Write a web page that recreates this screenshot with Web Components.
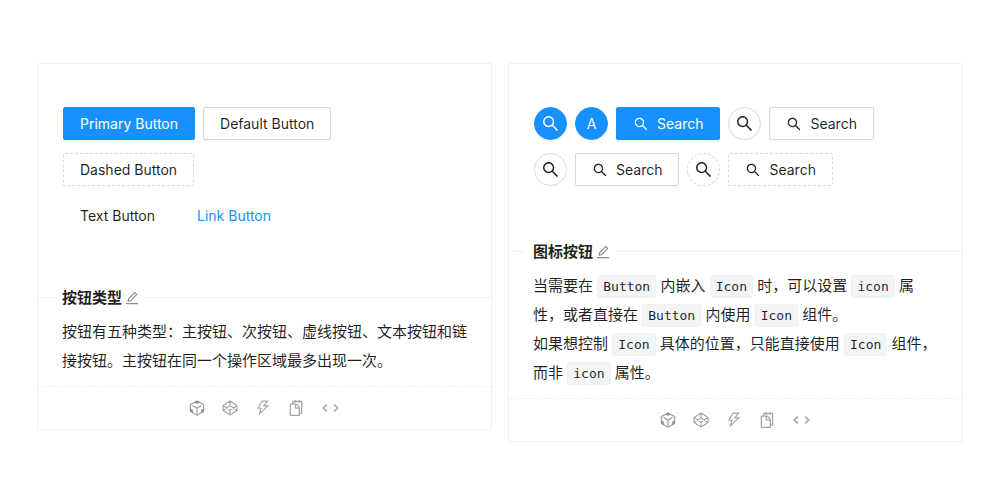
<!DOCTYPE html>
<html lang="zh-CN">
<head>
<meta charset="utf-8">
<meta name="viewport" content="width=device-width, initial-scale=1">
<title>Button 按钮</title>
<style>
  body {
    margin: 0;
    padding: 63px 37px;
    background: #fff;
    color: rgba(0, 0, 0, .88);
    font: 15px/29px Inter, "Noto Sans CJK SC", sans-serif;
  }
  code {
    display: inline-block;
    vertical-align: middle;
    padding: 0 5px;
    border: 1px solid #eff0f2;
    border-radius: 3px;
    background: #f2f4f5;
    font: 13px/21px "DejaVu Sans Mono", monospace;
  }
</style>
</head>
<body>
<demo-grid>
  <demo-card heading="按钮类型">
    <button-row slot="demo">
      <ui-button type="primary">Primary Button</ui-button>
      <ui-button>Default Button</ui-button>
      <ui-button type="dashed">Dashed Button</ui-button>
    </button-row>
    <button-row slot="demo">
      <ui-button type="text">Text Button</ui-button>
      <ui-button type="link">Link Button</ui-button>
    </button-row>
    <p>按钮有五种类型：主按钮、次按钮、虚线按钮、文本按钮和链接按钮。主按钮在同一个操作区域最多出现一次。</p>
  </demo-card>
  <demo-card heading="图标按钮">
    <button-row slot="demo">
      <ui-button type="primary" shape="circle" icon="search" label="Search"></ui-button>
      <ui-button type="primary" shape="circle">A</ui-button>
      <ui-button type="primary" icon="search">Search</ui-button>
      <ui-button shape="circle" icon="search" label="Search"></ui-button>
      <ui-button icon="search">Search</ui-button>
    </button-row>
    <button-row slot="demo">
      <ui-button shape="circle" icon="search" label="Search"></ui-button>
      <ui-button icon="search">Search</ui-button>
      <ui-button type="dashed" shape="circle" icon="search" label="Search"></ui-button>
      <ui-button type="dashed" icon="search">Search</ui-button>
    </button-row>
    <p>当需要在 <code>Button</code> 内嵌入 <code>Icon</code> 时，可以设置 <code>icon</code> 属性，或者直接在 <code>Button</code> 内使用 <code>Icon</code> 组件。</p>
    <p>如果想控制 <code>Icon</code> 具体的位置，只能直接使用 <code>Icon</code> 组件，而非 <code>icon</code> 属性。</p>
  </demo-card>
</demo-grid>

<script>
const ICONS = {
  search: ['0 0 1024 1024', '<path fill="currentColor" d="M909.6 854.5L649.9 594.8C690.2 542.7 712 479 712 412c0-80.2-31.3-155.4-87.9-212.1-56.6-56.7-132-87.9-212.1-87.9s-155.5 31.3-212.1 87.9C143.2 256.5 112 331.8 112 412c0 80.1 31.3 155.5 87.9 212.1C256.5 680.8 331.8 712 412 712c67 0 130.6-21.8 182.7-62l259.7 259.6a8.2 8.2 0 0011.6 0l43.6-43.5a8.2 8.2 0 000-11.6zM570.4 570.4C528 612.7 471.8 636 412 636s-116-23.3-158.4-65.6C211.3 528 188 471.8 188 412s23.3-116.1 65.6-158.4C296 211.3 352.2 188 412 188s116.1 23.2 158.4 65.6S636 352.2 636 412s-23.3 116.1-65.6 158.4z"/>'],
  edit: ['64 64 896 896', '<path fill="currentColor" d="M257.7 752c2 0 4-.2 6-.5L431.9 722c2-.4 3.9-1.3 5.3-2.8l423.9-423.9a9.96 9.96 0 000-14.1L694.9 114.9c-1.9-1.9-4.4-2.9-7.1-2.9s-5.2 1-7.1 2.9L256.8 538.8c-1.5 1.5-2.4 3.3-2.8 5.3l-29.5 168.2a33.5 33.5 0 009.4 29.8c6.6 6.4 14.9 9.9 23.8 9.9zm67.4-174.4L687.8 215l73.3 73.3-362.7 362.6-88.9 15.7 15.6-89zM880 836H144c-17.7 0-32 14.3-32 32v36c0 4.4 3.6 8 8 8h784c4.4 0 8-3.6 8-8v-36c0-17.7-14.3-32-32-32z"/>'],
  sandbox: ['0 0 16 16', '<g fill="none" stroke="currentColor" stroke-width="1.3" stroke-linejoin="round"><path d="M8 1l6.6 3.6v6.9L8 15.2l-6.6-3.7V4.6zM3.6 5.6L8 8.1l4.4-2.5M8 8.1V15"/></g><path fill="currentColor" d="M5.2 2.4L8 4l2.8-1.600L8 .9zM1.600 8.400l2.500 1.400v3L1.600 11.400zM14.400 8.400l-2.500 1.400v3l2.500-1.400z"/>'],
  codepen: ['0 0 16 16', '<g fill="none" stroke="currentColor" stroke-width="1.1" stroke-linejoin="round"><path d="M8 1l7 4.500v5L8 15l-7-4.500v-5zM8 1v4.800M8 10.200V15M1 5.500l7 4.700 7-4.700M1 10.500l7-4.700 7 4.700"/></g>'],
  bolt: ['64 64 896 896', '<path fill="currentColor" d="M848 359.3H627.7L825.8 109c4.1-5.3.4-13-6.3-13H436c-2.8 0-5.5 1.5-6.9 4L170 547.5c-3.1 5.3.7 12 6.9 12h174.4l-89.4 357.6c-1.9 7.8 7.5 13.3 13.3 7.7L853.5 373c5.2-4.9 1.7-13.7-5.5-13.7zM378.2 732.5l60.3-241H281.1l189.6-327.4h224.6L487 427.4h211L378.2 732.5z"/>'],
  copy: ['64 64 896 896', '<path fill="currentColor" d="M832 112H724V72c0-4.4-3.6-8-8-8h-56c-4.4 0-8 3.6-8 8v40H500V72c0-4.4-3.6-8-8-8h-56c-4.4 0-8 3.6-8 8v40H320c-17.7 0-32 14.3-32 32v120h-96c-17.7 0-32 14.3-32 32v632c0 17.7 14.3 32 32 32h512c17.7 0 32-14.3 32-32v-96h96c17.7 0 32-14.3 32-32V144c0-17.7-14.3-32-32-32zM664 888H232V336h218v174c0 22.1 17.9 40 40 40h174v338zm0-402H514V336h.2L664 485.8v.2zm128 274h-56V456L544 264H360v-80h68v32c0 4.4 3.6 8 8 8h56c4.4 0 8-3.6 8-8v-32h152v32c0 4.4 3.6 8 8 8h56c4.4 0 8-3.6 8-8v-32h68v576z"/>'],
  code: ['0 0 20 16', '<path fill="none" stroke="currentColor" stroke-width="1.6" d="M6 4.600L2.200 8 6 11.400M13 4.600L16.800 8 13 11.400"/>']
};

class UiIcon extends HTMLElement {
  constructor() {
    super();
    this.attachShadow({ mode: 'open' });
  }
  connectedCallback() {
    const [box, shape] = ICONS[this.getAttribute('name')];
    this.shadowRoot.innerHTML = `
      <style>
        :host { display: block; flex: none; width: 16px; height: 16px; }
        svg { display: block; width: 100%; height: 100%; }
      </style>
      <svg viewBox="${box}" aria-hidden="true">${shape}</svg>`;
  }
}

class UiButton extends HTMLElement {
  constructor() {
    super();
    this.attachShadow({ mode: 'open' });
  }
  connectedCallback() {
    const icon = this.getAttribute('icon');
    const label = this.getAttribute('label');
    this.shadowRoot.innerHTML = `
      <style>
        :host { display: block; }
        button {
          box-sizing: border-box;
          display: flex; align-items: center; justify-content: center; gap: 8px;
          height: 33px; padding: 0 16px;
          border: 1px solid #d9d9d9; border-radius: 2px;
          background: #fff; color: rgba(0, 0, 0, .88);
          font: 14px/22px Inter, "Noto Sans CJK SC", sans-serif;
          white-space: nowrap; cursor: pointer;
          box-shadow: 0 2px 0 rgba(0, 0, 0, .016);
        }
        :host([type=primary]) button { background: #1890ff; border-color: #1890ff; color: #fff; box-shadow: 0 2px 0 rgba(0, 0, 0, .04); }
        :host([type=dashed]) button { border-style: dashed; }
        :host([type=text]) button, :host([type=link]) button { border-color: transparent; background: none; box-shadow: none; }
        :host([type=link]) button { color: #1890ff; }
        :host([shape=circle]) button { width: 33px; padding: 0; border-radius: 50%; }
        :host([shape=circle]) ui-icon { width: 19px; height: 19px; }
      </style>
      <button type="button"${label ? ` aria-label="${label}"` : ''}>${icon ? `<ui-icon name="${icon}"></ui-icon>` : ''}${label ? '' : '<slot></slot>'}</button>`;
  }
}

class ButtonRow extends HTMLElement {
  constructor() {
    super();
    this.attachShadow({ mode: 'open' }).innerHTML = `
      <style>:host { display: flex; flex-wrap: wrap; gap: 13px 8px; }</style>
      <slot></slot>`;
  }
}

class DemoCard extends HTMLElement {
  constructor() {
    super();
    this.attachShadow({ mode: 'open' });
  }
  connectedCallback() {
    this.shadowRoot.innerHTML = `
      <style>
        :host { display: block; border: 1px solid #f0f0f0; border-radius: 2px; }
        .demo { display: flex; flex-direction: column; gap: 13px; padding: 43px 24px 51px 25px; }
        header { display: flex; align-items: center; }
        header::before, header::after { content: ""; height: 1px; background: #f0f0f0; }
        header::before { width: 16px; }
        header::after { flex: 1; }
        h2 { margin: 0; padding: 0 3px 0 8px; font-size: 15px; line-height: 29px; font-weight: 600; }
        a { margin-right: 7px; color: rgba(0, 0, 0, .45); }
        .text { padding: 5px 24px 11px; }
        ::slotted(p) { margin: 0; }
        footer {
          display: flex; align-items: center; justify-content: center; gap: 17px;
          padding: 13px 0; border-top: 1px dashed #f0f0f0;
        }
        footer button { padding: 0; border: 0; background: none; color: rgba(0, 0, 0, .35); cursor: pointer; }
        a ui-icon { width: 14px; height: 14px; }
        ui-icon[name=code] { width: 20px; }
      </style>
      <section class="demo"><slot name="demo"></slot></section>
      <header>
        <h2>${this.getAttribute('heading')}</h2>
        <a href="#edit" aria-label="编辑"><ui-icon name="edit"></ui-icon></a>
      </header>
      <div class="text"><slot></slot></div>
      <footer>
        <button type="button" aria-label="CodeSandbox"><ui-icon name="sandbox"></ui-icon></button>
        <button type="button" aria-label="CodePen"><ui-icon name="codepen"></ui-icon></button>
        <button type="button" aria-label="StackBlitz"><ui-icon name="bolt"></ui-icon></button>
        <button type="button" aria-label="复制代码"><ui-icon name="copy"></ui-icon></button>
        <button type="button" aria-label="显示代码"><ui-icon name="code"></ui-icon></button>
      </footer>`;
  }
}

class DemoGrid extends HTMLElement {
  constructor() {
    super();
    this.attachShadow({ mode: 'open' }).innerHTML = `
      <style>
        :host { display: grid; grid-template-columns: 1fr 1fr; gap: 16px; align-items: start; }
        @media (max-width: 720px) { :host { grid-template-columns: 1fr; } }
      </style>
      <slot></slot>`;
  }
}

customElements.define('ui-icon', UiIcon);
customElements.define('ui-button', UiButton);
customElements.define('button-row', ButtonRow);
customElements.define('demo-card', DemoCard);
customElements.define('demo-grid', DemoGrid);
</script>
</body>
</html>
